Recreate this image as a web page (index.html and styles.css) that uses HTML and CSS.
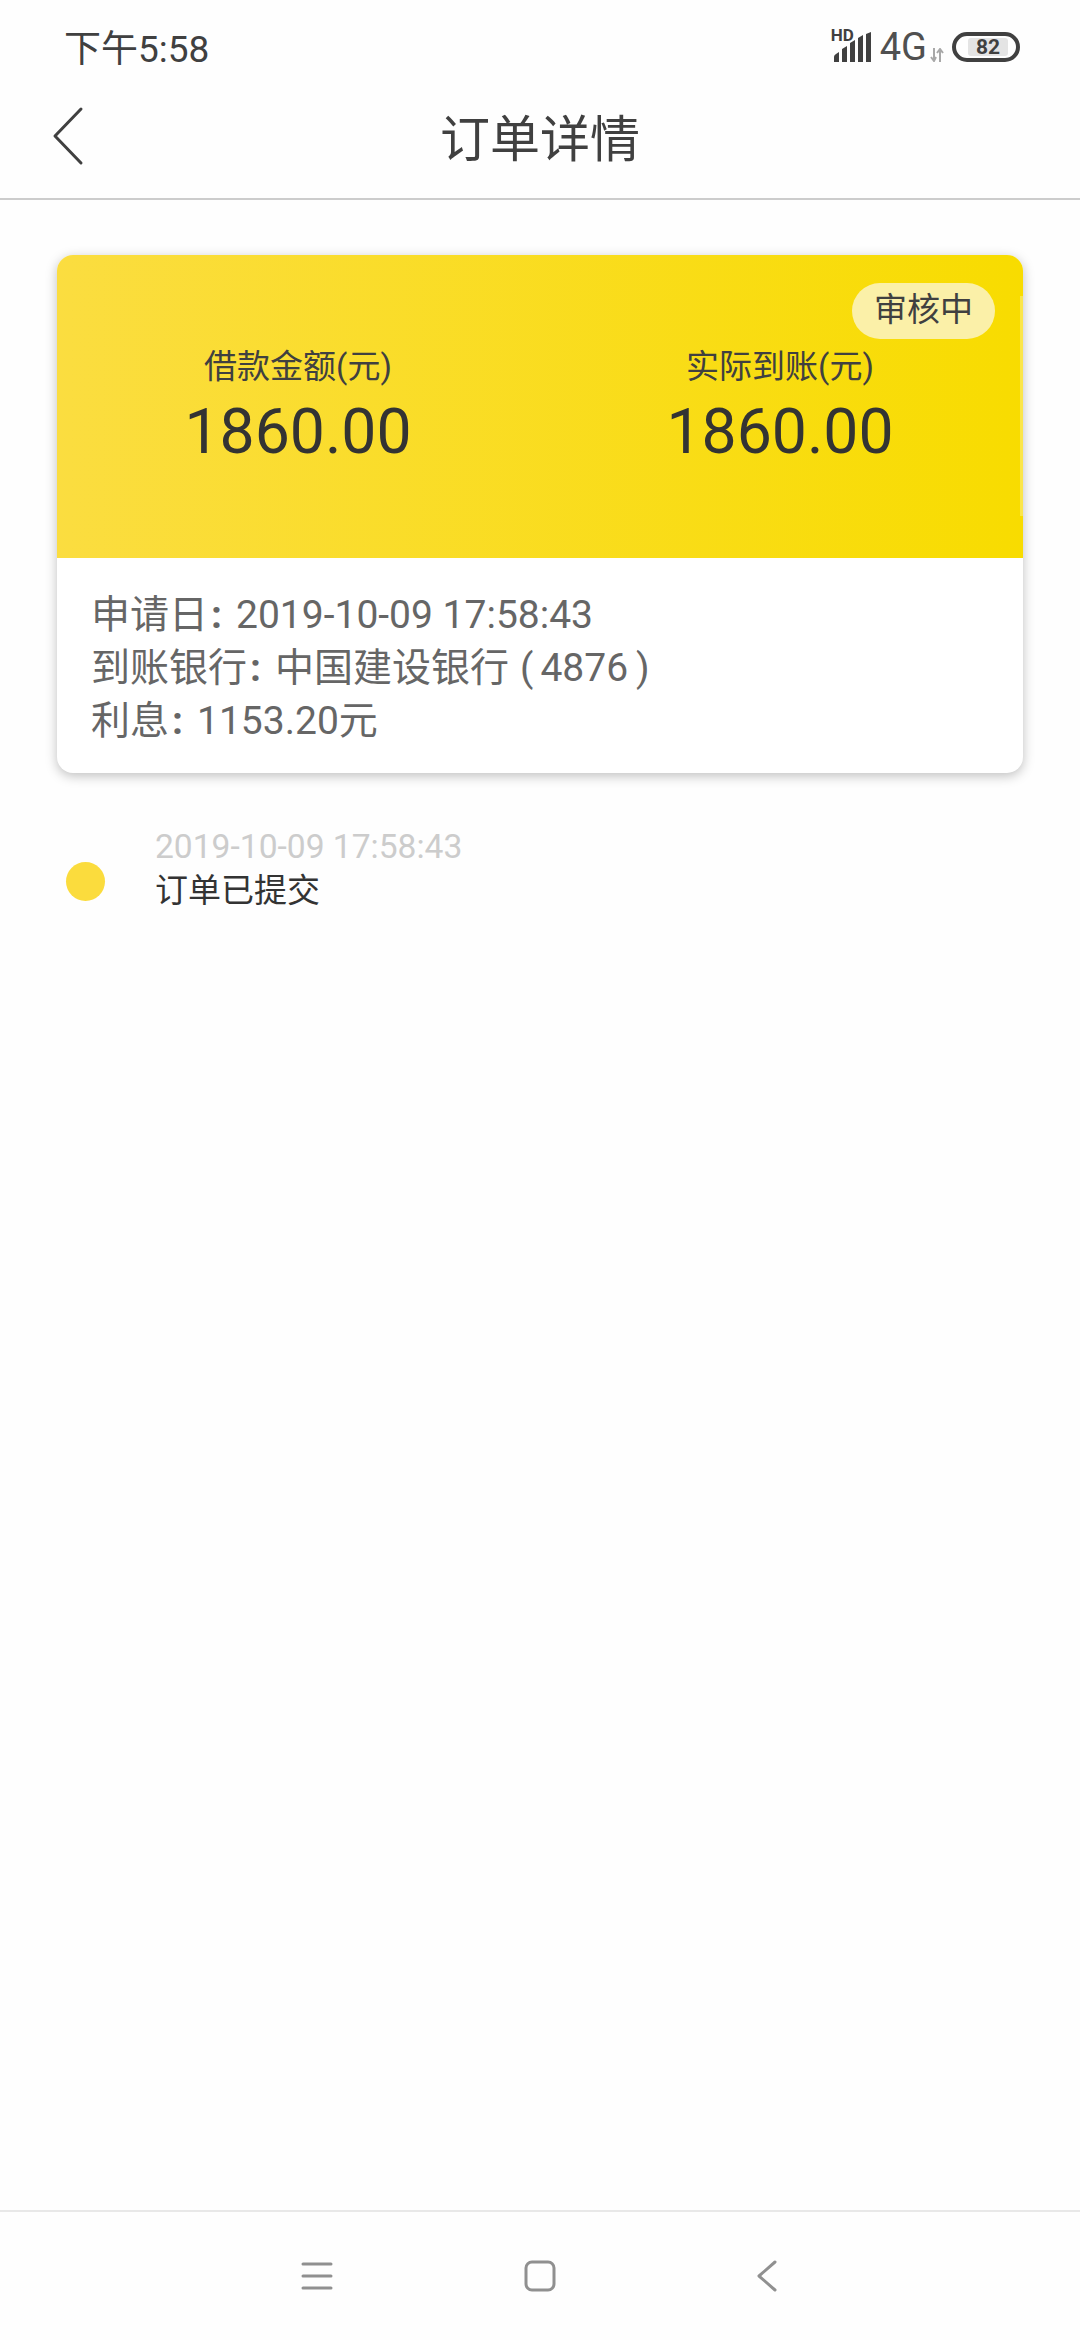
FILE: index.html
```html
<!DOCTYPE html>
<html>
<head>
    <title>订单详情</title>
    <meta charset="UTF-8">
    <link rel="stylesheet" href="styles.css">
</head>
<body>
    <div class="page">
        <div class="status-bar">
            <div class="status-time">下午5:58</div>
            <div class="status-icons">
                <div class="signal">
                    <span class="signal-hd">HD</span>
                    <svg width="42" height="30" viewBox="0 0 42 30">
                        <path d="M1 30V25Q1 23 3 22L6 20V30Z M9 30V17L14 14V30Z M17 30V11L22 8V30Z M25 30V6L30 3V30Z M33 30V2L38 0V30Z" fill="#404040"/>
                    </svg>
                </div>
                <span class="net-type">4G</span>
                <svg class="net-arrows" width="14" height="14" viewBox="0 0 14 14">
                    <path d="M4 0V13M1 9L4 13L6 9M10 14V1M7 5L10 1L13 5" fill="none" stroke="#a8a8a8" stroke-width="2"/>
                </svg>
                <div class="battery">
                    <div class="battery-level">82</div>
                </div>
            </div>
        </div>

        <div class="app-bar">
            <svg class="back-icon" width="32" height="60" viewBox="0 0 32 60">
                <path d="M29 3L3 30L29 57" fill="none" stroke="#404040" stroke-width="3" stroke-linecap="round" stroke-linejoin="round"/>
            </svg>
            <h1>订单详情</h1>
        </div>

        <div class="content">
            <div class="card">
                <div class="card-top">
                    <div class="amount">
                        <div class="amount-label">借款金额(元)</div>
                        <div class="amount-value">1860.00</div>
                    </div>
                    <div class="amount">
                        <div class="amount-label">实际到账(元)</div>
                        <div class="amount-value">1860.00</div>
                    </div>
                    <div class="badge">审核中</div>
                    <div class="card-edge"></div>
                </div>
                <div class="card-info">
                    <div>申请日<span class="colon">:</span>2019-10-09 17:58:43</div>
                    <div>到账银行<span class="colon">:</span>中国建设银行<span class="paren-open">(</span>4876<span class="paren-close">)</span></div>
                    <div>利息<span class="colon">:</span>1153.20元</div>
                </div>
            </div>

            <div class="timeline-item">
                <div class="timeline-dot"></div>
                <div>
                    <div class="timeline-time">2019-10-09 17:58:43</div>
                    <div class="timeline-text">订单已提交</div>
                </div>
            </div>
        </div>

        <div class="nav-bar">
            <svg width="32" height="30" viewBox="0 0 32 30">
                <path d="M2 3H30M2 15H30M2 27H30" fill="none" stroke="#909090" stroke-width="3" stroke-linecap="round"/>
            </svg>
            <svg width="32" height="32" viewBox="0 0 32 32">
                <rect x="2" y="2" width="28" height="28" rx="6" fill="none" stroke="#909090" stroke-width="3"/>
            </svg>
            <svg width="32" height="32" viewBox="0 0 32 32">
                <path d="M28 2L12 16L28 30" fill="none" stroke="#909090" stroke-width="3" stroke-linecap="round" stroke-linejoin="round"/>
            </svg>
        </div>
    </div>
</body>
</html>
```

FILE: styles.css
```css
html, body {
    margin: 0;
    padding: 0;
}
body {
    font-family: Roboto, "Noto Sans CJK SC", sans-serif;
    background-color: #fefefe;
    color: #333;
}
.page {
    width: 1080px;
    height: 2340px;
    display: flex;
    flex-direction: column;
    overflow: hidden;
}
.status-bar {
    height: 66px;
    display: flex;
    justify-content: space-between;
    padding: 0 60px 0 64px;
    box-sizing: border-box;
}
.status-time {
    font-size: 37px;
    line-height: 48px;
    margin-top: 26px;
    color: #404040;
}
.status-icons {
    display: flex;
    align-items: flex-start;
    margin-top: 28px;
}
.signal {
    position: relative;
    width: 42px;
    height: 34px;
    margin-right: 5px;
}
.signal svg {
    position: absolute;
    left: 0;
    top: 4px;
}
.signal-hd {
    position: absolute;
    left: -2px;
    top: 0;
    font-size: 17px;
    line-height: 15px;
    font-weight: bold;
    color: #404040;
}
.net-type {
    font-size: 38px;
    line-height: 38px;
    color: #505050;
}
.net-arrows {
    margin: 20px 8px 0 3px;
}
.battery {
    width: 68px;
    height: 30px;
    margin-top: 4px;
    border: 4px solid #404040;
    border-radius: 16px;
    box-sizing: border-box;
    padding: 2px 8px 2px 12px;
}
.battery-level {
    height: 18px;
    background-color: #e4e4e4;
    border-radius: 3px;
    font-size: 21px;
    line-height: 18px;
    font-weight: bold;
    text-align: center;
    color: #404040;
}
.app-bar {
    position: relative;
    height: 134px;
    display: flex;
    align-items: center;
    justify-content: center;
    border-bottom: 2px solid #ccc;
    box-sizing: border-box;
}
.app-bar h1 {
    margin: 5px 0 0;
    font-size: 50px;
    font-weight: normal;
    color: #404040;
}
.back-icon {
    position: absolute;
    left: 52px;
    top: 40px;
}
.content {
    flex: 1;
    padding: 55px 57px 0;
}
.card {
    border-radius: 16px;
    overflow: hidden;
    background-color: #fff;
    box-shadow: 0 3px 12px rgba(0,0,0,0.25);
}
.card-top {
    position: relative;
    height: 303px;
    display: flex;
    padding: 90px 2px 0 0;
    box-sizing: border-box;
    background: linear-gradient(to right, #fbdd40, #f8dc00);
}
.amount {
    flex: 1;
    text-align: center;
}
.amount-label {
    font-size: 33px;
    line-height: 44px;
    color: #404040;
}
.amount-value {
    font-size: 62.5px;
    line-height: 86px;
    color: #333;
}
.badge {
    position: absolute;
    right: 28px;
    top: 28px;
    height: 56px;
    padding: 0 22px;
    border-radius: 28px;
    font-size: 33px;
    line-height: 54px;
    background-color: #fbf0a8;
    color: #404040;
}
.card-edge {
    position: absolute;
    right: 0;
    top: 41px;
    width: 3px;
    height: 220px;
    background-color: #fbe64a;
}
.card-info {
    padding: 31px 24px 25px 34px;
    font-size: 39px;
    line-height: 53px;
    color: #666;
}
.colon {
    margin: 0 14px 0 3px;
    font-weight: bold;
}
.paren-open {
    margin: 0 7px 0 11px;
}
.paren-close {
    margin-left: 8px;
}
.timeline-item {
    display: flex;
    align-items: flex-end;
    margin-top: 52px;
    padding-left: 9px;
}
.timeline-dot {
    width: 39px;
    height: 39px;
    margin: 0 50px 12px 0;
    border-radius: 50%;
    background-color: #fbdc3d;
}
.timeline-time {
    font-size: 33.6px;
    line-height: 43px;
    color: #ccc;
}
.timeline-text {
    font-size: 33px;
    line-height: 45px;
    color: #333;
}
.nav-bar {
    height: 130px;
    display: flex;
    align-items: center;
    justify-content: center;
    gap: 191px;
    border-top: 2px solid #e8e8e8;
    box-sizing: border-box;
}
```
